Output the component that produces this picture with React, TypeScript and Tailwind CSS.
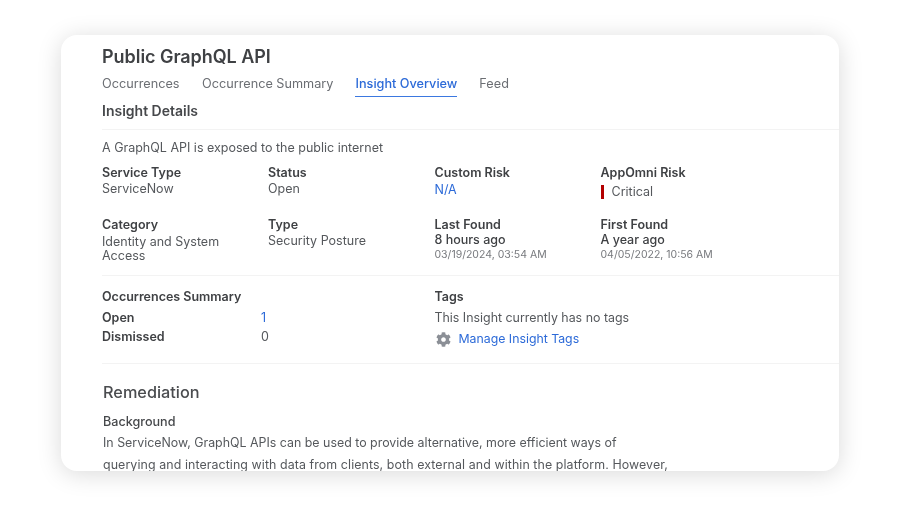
import { FaCog } from "react-icons/fa";

function Field({ label, children, w }: { label: string; children: React.ReactNode; w: string }) {
  return (
    <div className={w}>
      <div className="text-[12.5px] leading-[16px] font-semibold text-[#3f4144]">{label}</div>
      {children}
    </div>
  );
}

const val = "text-[12.5px] leading-[16px] text-[#55585c]";

export default function App() {
  return (
    <div className="h-[506px] w-[900px] bg-white pt-[35px] pl-[61px] overflow-hidden [font-family:Inter,'Noto_Sans',sans-serif]">
      <div className="w-[778px] h-[436px] bg-white rounded-[16px] overflow-hidden shadow-[0_3px_24px_rgba(0,0,0,0.15)] pl-[41px] blur-[0.3px]">
        <h1 className="pt-[10px] text-[18px] leading-[24px] font-semibold tracking-[-0.05px] text-[#3f4144]">Public GraphQL API</h1>
        <div className="flex gap-[22px] text-[12.7px] leading-[18px] text-[#6b6e73]">
          <div className="w-[78px] shrink-0 whitespace-nowrap pt-[6px] pb-[3px]">Occurrences</div>
          <div className="pt-[6px] pb-[3px]">Occurrence Summary</div>
          <div className="pt-[6px] pb-[3px] font-medium text-[#2c6ad8] border-b border-[#3b78e0]">Insight Overview</div>
          <div className="pt-[6px] pb-[3px]">Feed</div>
        </div>
        <h2 className="mt-[4px] pb-[8px] text-[14px] leading-[20px] font-semibold text-[#46484b] border-b border-[#f3f3f3]">Insight Details</h2>

        <p className="mt-[9px] text-[12.5px] leading-[18px] text-[#55585c]">A GraphQL API is exposed to the public internet</p>

        <div className="mt-[8px] flex h-[52px]">
          <Field label="Service Type" w="w-[166px]"><div className={val}>ServiceNow</div></Field>
          <Field label="Status" w="w-[166.5px]"><div className={val}>Open</div></Field>
          <Field label="Custom Risk" w="w-[166px]"><div className="mt-[1px] text-[12.5px] leading-[16px] text-[#2c6ad8]">N/A</div></Field>
          <Field label="AppOmni Risk" w="w-[166px]">
            <div className="mt-[3px] flex items-center gap-[8px] text-[12.5px] leading-[16px] text-[#55585c]">
              <span className="h-[14px] w-[3px] bg-[#b30000]" />
              Critical
            </div>
          </Field>
        </div>

        <div className="flex pb-[12px] border-b border-[#f3f3f3]">
          <Field label="Category" w="w-[166px]"><div className="mt-[2px] w-[140px] text-[12.5px] leading-[14px] text-[#55585c]">Identity and System Access</div></Field>
          <Field label="Type" w="w-[166.5px]"><div className={val}>Security Posture</div></Field>
          <Field label="Last Found" w="w-[166px]">
            <div className="text-[12.5px] leading-[14px] font-medium text-[#3f4144]">8 hours ago</div>
            <div className="text-[10.5px] leading-[15px] text-[#77797d]">03/19/2024, 03:54 AM</div>
          </Field>
          <Field label="First Found" w="w-[166px]">
            <div className="text-[12.5px] leading-[14px] font-medium text-[#3f4144]">A year ago</div>
            <div className="text-[10.5px] leading-[15px] text-[#77797d]">04/05/2022, 10:56 AM</div>
          </Field>
        </div>

        <div className="mt-[13px] flex border-b border-[#f3f3f3] h-[75px]">
          <div className="w-[332.5px]">
            <div className="text-[12.5px] leading-[16px] font-semibold text-[#3f4144]">Occurrences Summary</div>
            <div className="mt-[4px] flex h-[19px] items-center text-[12.5px]">
              <span className="w-[159px] font-semibold text-[#3f4144]">Open</span>
              <span className="text-[#2c6ad8]">1</span>
            </div>
            <div className="flex h-[19px] items-center text-[12.5px]">
              <span className="w-[159px] font-semibold text-[#3f4144]">Dismissed</span>
              <span className="text-[#55585c]">0</span>
            </div>
          </div>
          <div>
            <div className="text-[12.5px] leading-[16px] font-semibold text-[#3f4144]">Tags</div>
            <div className="mt-[3px] text-[12.4px] leading-[19px] text-[#55585c]">This Insight currently has no tags</div>
            <div className="mt-[2px] flex items-center gap-[8px] pl-[1px] text-[12.3px] leading-[20px] text-[#2c6ad8]">
              <FaCog className="text-[15px] text-[#8b8f96]" />
              Manage Insight Tags
            </div>
          </div>
        </div>

        <h2 className="mt-[17px] pl-[1px] text-[16.3px] leading-[22px] font-medium text-[#4a4c4f]">Remediation</h2>
        <div className="mt-[9px] pl-[1px] text-[12.6px] leading-[20px] font-medium text-[#46484b]">Background</div>
        <p className="pl-[1px] whitespace-nowrap text-[12.4px] leading-[22px] text-[#55585c]">
          In ServiceNow, GraphQL APIs can be used to provide alternative, more efficient ways of
          <br />
          <span className="tracking-[0.09px]">querying and interacting with data from clients, both external and within the platform. However,</span>
        </p>
      </div>
    </div>
  );
}
